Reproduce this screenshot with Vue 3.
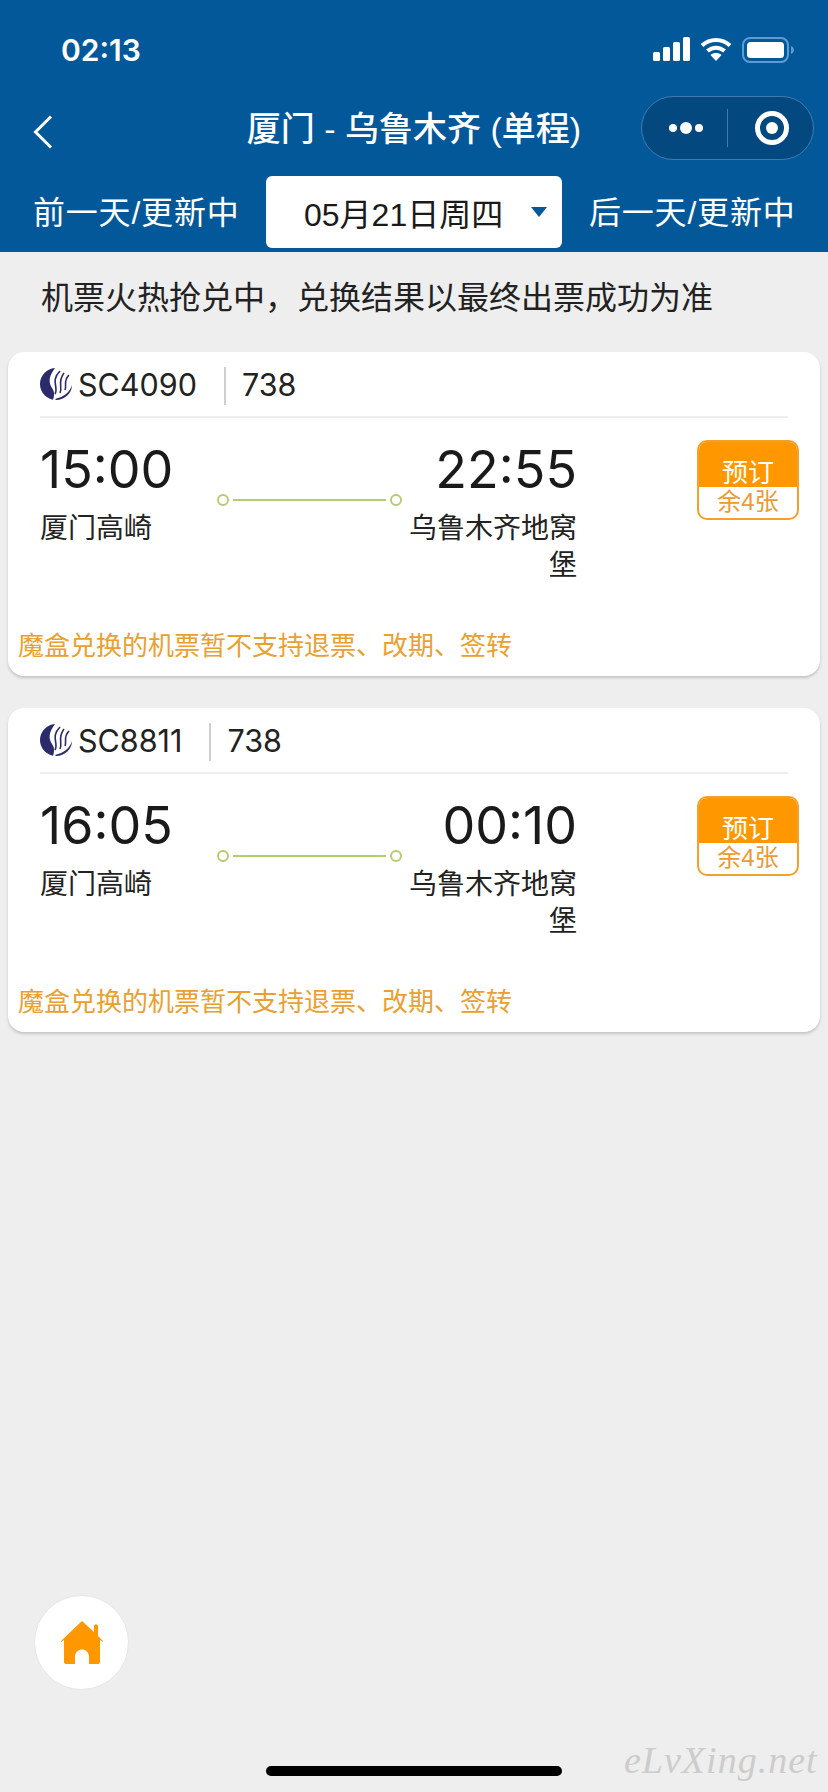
<template>
  <div class="page">
    <header class="top">
      <div class="status">
        <span class="clock">02:13</span>
        <div class="status-icons">
          <svg width="37" height="24" viewBox="0 0 37 24" fill="#fff">
            <rect x="0" y="15" width="7" height="9" rx="1.5" />
            <rect x="10" y="10" width="7" height="14" rx="1.5" />
            <rect x="20" y="5" width="7" height="19" rx="1.5" />
            <rect x="30" y="0" width="7" height="24" rx="1.5" />
          </svg>
          <svg width="32" height="24" viewBox="0 0 32 24" fill="none" stroke="#fff" stroke-width="4">
            <path d="M2 8.5C10 1 22 1 30 8.5" />
            <path d="M7.5 14C12.5 9.5 19.5 9.5 24.5 14" />
            <path d="M16 24l-5.5-6c3-2.6 8-2.6 11 0z" fill="#fff" stroke="none" />
          </svg>
          <svg width="52" height="26" viewBox="0 0 52 26" fill="none">
            <rect x="1" y="1" width="45" height="24" rx="7" stroke="#5f9bd0" stroke-width="2" />
            <rect x="5" y="5" width="37" height="16" rx="3.5" fill="#fff" />
            <path d="M49 9c2 1 3 2.500 3 4s-1 3-3 4z" fill="#5f9bd0" />
          </svg>
        </div>
      </div>

      <div class="nav">
        <svg class="back" width="20" height="34" viewBox="0 0 20 34" fill="none" stroke="#fff" stroke-width="3">
          <path d="M18 1.500L2.500 17 18 32.500" />
        </svg>
        <h1 class="title">厦门 - 乌鲁木齐 (单程)</h1>
        <div class="capsule">
          <div class="capsule-side">
            <i class="dot"></i><i class="dot dot-big"></i><i class="dot"></i>
          </div>
          <div class="capsule-line"></div>
          <div class="capsule-side">
            <span class="target"></span>
          </div>
        </div>
      </div>

      <div class="days">
        <span class="day">前一天/更新中</span>
        <div class="date-box">
          <span>05月21日周四</span>
          <i class="caret"></i>
        </div>
        <span class="day">后一天/更新中</span>
      </div>
    </header>

    <p class="notice">机票火热抢兑中，兑换结果以最终出票成功为准</p>

    <div class="list">
      <div v-for="f in flights" :key="f.no" class="card">
        <div class="card-head">
          <svg class="logo" width="32" height="32" viewBox="0 0 32 32">
            <circle cx="16" cy="16" r="16" fill="#2b2a6b" />
            <path d="M15 0C9 8 8 14 12 20c2 3 3 6 1 12h19V0z" fill="#fff" />
            <path d="M15 31C24 29 30 24 32 17c0 8-7 15-16 15z" fill="#2b2a6b" />
            <path d="M15 26c4-7-5-13 5-23M20 25c3-6-3-11 4-20M25 22c2-5-2-9 4-15" fill="none" stroke="#2b2a6b" stroke-width="1.600" />
          </svg>
          <span class="flight-no">{{ f.no }}</span>
          <span class="sep"></span>
          <span class="plane">{{ f.plane }}</span>
        </div>

        <div class="card-body">
          <div class="trip">
            <div class="end">
              <div class="time">{{ f.dep }}</div>
              <div class="station">厦门高崎</div>
            </div>
            <div class="route">
              <i class="node"></i>
              <i class="route-line"></i>
              <i class="node"></i>
            </div>
            <div class="end end-right">
              <div class="time">{{ f.arr }}</div>
              <div class="station">乌鲁木齐地窝堡</div>
            </div>
          </div>
          <div class="book">
            <div class="book-top">预订</div>
            <div class="book-left">余4张</div>
          </div>
        </div>

        <div class="warn">魔盒兑换的机票暂不支持退票、改期、签转</div>
      </div>
    </div>

    <div class="home-btn">
      <svg width="44" height="44" viewBox="0 0 44 44" fill="#ff9800">
        <path d="M22 0L34 11V5c0-2 4-2 4 0V15L43 20V21L40 19V41c0 1-1 2-2 2H29V36c0-10-14-10-14 0V43H6c-1 0-2-1-2-2V19L1 21V20z" />
      </svg>
    </div>

    <div class="home-bar"></div>
    <div class="mark">eLvXing.net</div>
  </div>
</template>

<script setup>
const flights = [
  { no: 'SC4090', plane: '738', dep: '15:00', arr: '22:55' },
  { no: 'SC8811', plane: '738', dep: '16:05', arr: '00:10' },
]
</script>

<style>
html, body { margin: 0; padding: 0; background: #eeeeee; }
</style>

<style scoped>
.page { position: relative; width: 828px; height: 1792px; overflow: hidden; background: #eeeeee; color: #1a1a1a; font-family: "Liberation Sans", "Noto Sans CJK SC", sans-serif; }

.top { background: #03589a; height: 252px; color: #fff; }
.status { height: 96px; box-sizing: border-box; padding: 36px 34px 0 61px; display: flex; justify-content: space-between; align-items: flex-start; }
.clock { font-family: Inter, sans-serif; font-size: 30px; font-weight: 600; line-height: 28px; }
.status-icons { display: flex; align-items: flex-start; gap: 10px; padding-top: 1px; }

.nav { position: relative; height: 64px; display: flex; align-items: center; justify-content: flex-end; padding-right: 14px; }
.back { position: absolute; left: 33px; top: 19px; }
.title { position: absolute; left: 0; top: 1px; width: 828px; margin: 0; text-align: center; font-size: 34px; font-weight: 500; line-height: 64px; }
.capsule { position: relative; width: 173px; height: 64px; box-sizing: border-box; display: flex; align-items: center; border: 1px solid #3f7bb0; border-radius: 32px; background: #03497f; }
.capsule-side { flex: 1; display: flex; align-items: center; justify-content: center; gap: 3px; padding-left: 2px; }
.capsule-line { width: 1px; height: 38px; background: #3f7bb0; }
.dot { width: 8px; height: 8px; border-radius: 50%; background: #fff; }
.dot-big { width: 12px; height: 12px; }
.target { width: 34px; height: 34px; box-sizing: border-box; border: 5px solid #fff; border-radius: 50%; display: flex; align-items: center; justify-content: center; }
.target::before { content: ""; width: 12px; height: 12px; border-radius: 50%; background: #fff; }

.days { height: 72px; margin-top: 16px; display: flex; align-items: center; justify-content: space-between; padding: 0 33px; }
.day { font-size: 32px; line-height: 72px; width: 206px; white-space: nowrap; letter-spacing: 0.8px; position: relative; top: 1px; }
.date-box { width: 296px; height: 72px; box-sizing: border-box; padding-left: 38px; display: flex; align-items: center; background: #fff; border-radius: 6px; color: #1a1a1a; font-size: 32px; position: relative; }
.caret { position: absolute; left: 265px; top: 31px; width: 0; height: 0; border-left: 8px solid transparent; border-right: 8px solid transparent; border-top: 10px solid #03589a; }

.notice { margin: 0; padding: 0 0 0 41px; height: 100px; line-height: 92px; font-size: 32px; color: #222; }

.list { display: flex; flex-direction: column; gap: 32px; padding: 0 8px; }
.card { height: 324px; background: #fff; border-radius: 16px; box-shadow: 0 2px 3px rgba(0, 0, 0, 0.18); display: flex; flex-direction: column; }
.card-head { margin: 0 32px; height: 66px; box-sizing: border-box; border-bottom: 2px solid #eeeeee; display: flex; align-items: center; }
.logo { margin-right: 6px; }
.flight-no { font-family: Inter, sans-serif; font-size: 30.5px; color: #222; }
.sep { width: 2px; height: 38px; background: #cfcfcf; margin: 4px 16px 0 27px; }
.plane { font-family: Inter, sans-serif; font-size: 30.5px; color: #222; }

.card-body { flex: 1; display: flex; justify-content: space-between; padding: 22px 21px 0 32px; }
.trip { width: 537px; display: flex; justify-content: space-between; }
.end { width: 170px; }
.end-right { text-align: right; }
.time { font-family: Inter, sans-serif; font-size: 52px; line-height: 60px; color: #1a1a1a; }
.station { margin-top: 10px; font-size: 28px; line-height: 37px; color: #222; }
.route { flex: 1; height: 12px; margin-top: 54px; padding: 0 5px 0 7px; display: flex; align-items: center; justify-content: center; gap: 4px; }
.node { width: 12px; height: 12px; box-sizing: border-box; border: 2px solid #b5cd72; border-radius: 50%; }
.route-line { flex: 1; height: 2px; background: #b5cd72; }

.book { width: 102px; height: 80px; box-sizing: border-box; border: 2px solid #f6a02c; border-radius: 10px; overflow: hidden; text-align: center; }
.book-top { height: 45px; background: #ff9800; color: #fff; font-size: 26px; line-height: 62px; overflow: hidden; }
.book-left { color: #ec9a32; font-size: 24px; line-height: 30px; }

.warn { padding: 0 0 12px 10px; font-size: 26px; line-height: 36px; color: #eaa030; }

.home-btn { position: absolute; left: 34px; top: 1595px; width: 95px; height: 95px; box-sizing: border-box; border: 1px solid #e6e6e6; border-radius: 50%; background: #fff; display: flex; align-items: center; justify-content: center; }
.home-bar { position: absolute; left: 266px; top: 1766px; width: 296px; height: 10px; border-radius: 5px; background: #000; }
.mark { position: absolute; left: 624px; top: 1738px; font-family: "Liberation Serif", serif; font-style: italic; font-size: 38px; letter-spacing: 1px; color: #cccccc; }
</style>
